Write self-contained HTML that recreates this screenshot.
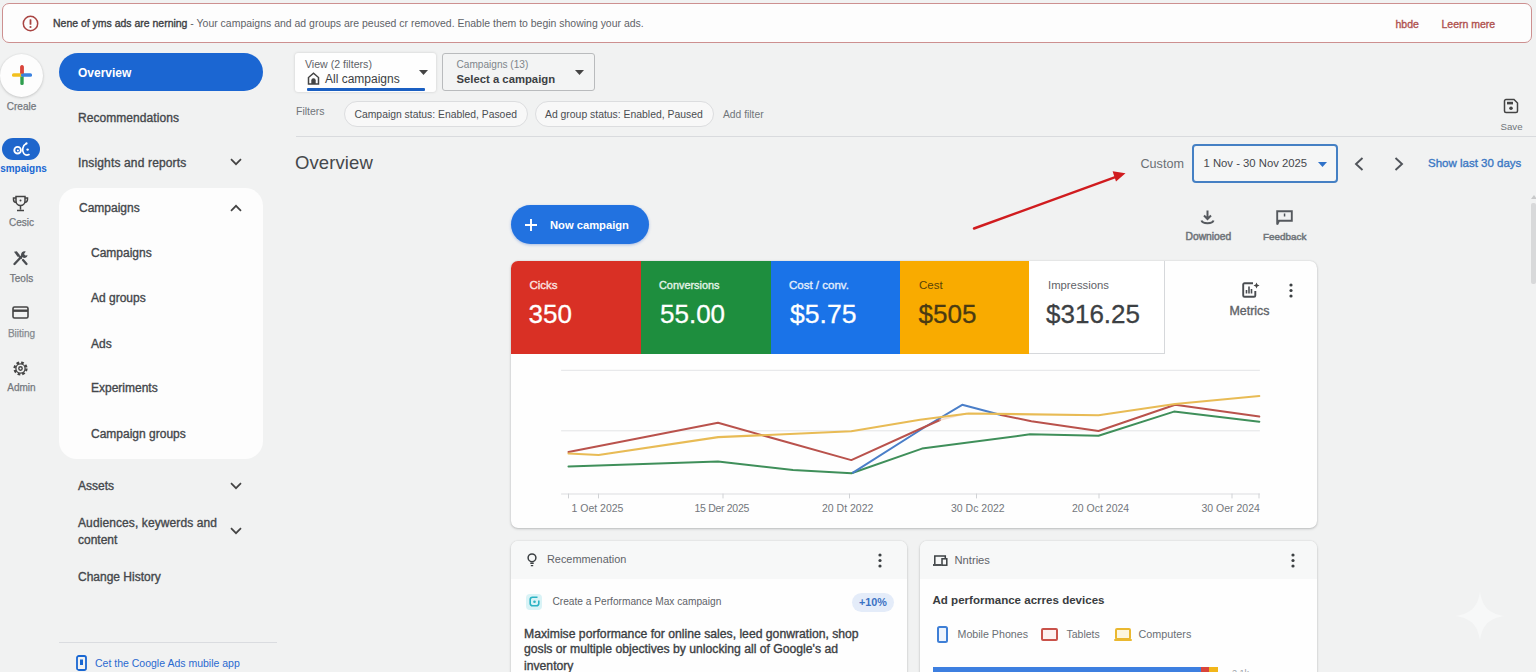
<!DOCTYPE html>
<html lang="en">
<head>
<meta charset="utf-8">
<title>Overview</title>
<style>
*{box-sizing:border-box;margin:0;padding:0}
html,body{width:1536px;height:672px;overflow:hidden;background:#f1f2f2}
body{font-family:"Liberation Sans",sans-serif;color:#3c4043;position:relative;font-size:12px}
.a{position:absolute;white-space:nowrap;line-height:1}
.m{-webkit-text-stroke:0.35px currentColor}
.b{font-weight:bold}
svg{position:absolute;overflow:visible}
/* banner */
#banner{left:2px;top:2.500px;width:1529.500px;height:40.600px;border:1.800px solid #cd9090;border-radius:7px;background:#fdfdfd}
/* rail */
.rl{font-size:10px;color:#74787d;text-align:center;width:60px;left:-8.5px;-webkit-text-stroke:0.25px currentColor}
/* nav */
.nv{font-size:12px;color:#44474b;left:78px}
.sub{font-size:12px;color:#44474b;left:91px}
.tl{font-size:11.500px}
.tv{font-size:26px;-webkit-text-stroke:0.3px currentColor}
.xl{top:503px;font-size:10.500px;color:#73777c}
</style>
</head>
<body>
<!-- BANNER -->
<div class="a" id="banner"></div>
<svg style="left:22px;top:14.700px" width="17" height="17" viewBox="0 0 17 17"><circle cx="8.5" cy="8.5" r="7.2" fill="none" stroke="#a94442" stroke-width="1.5"/><rect x="7.6" y="4.2" width="1.8" height="5.6" rx=".6" fill="#a94442"/><circle cx="8.5" cy="12" r="1.1" fill="#a94442"/></svg>
<div class="a" id="bt" style="left:53px;top:19px;font-size:10.47px;color:#5f6368"><span class="m" style="color:#3c4043">Nene of yms ads are nerning</span> - Your campaigns and ad groups are peused cr removed. Enable them to begin showing your ads.</div>
<div class="a m" id="hide" style="left:1395.500px;top:18.800px;font-size:10.5px;color:#b0524f">hbde</div>
<div class="a m" id="learn" style="left:1441.500px;top:18.800px;font-size:10.5px;color:#b0524f">Leern mere</div>

<!-- LEFT RAIL -->
<div class="a" style="left:-0.5px;top:53.5px;width:43px;height:43px;border-radius:50%;background:#fdfdfd;box-shadow:0 1px 3px rgba(0,0,0,.16),0 0 2px rgba(0,0,0,.08)"></div>
<svg style="left:11.5px;top:65px" width="20" height="20" viewBox="0 0 20 20"><rect x="8.3" y="0" width="3.4" height="11" rx="1.5" fill="#d9453b"/><rect x="8.3" y="9" width="3.4" height="11" rx="1.5" fill="#2f9e4f"/><rect x="0" y="8.3" width="11" height="3.4" rx="1.5" fill="#f2c01e"/><rect x="9" y="8.3" width="11" height="3.4" rx="1.5" fill="#3b82e0"/><rect x="8.3" y="1.500" width="3.400" height="7" fill="#d9453b"/></svg>
<div class="a rl" style="top:101.500px">Creale</div>

<div class="a" style="left:1.500px;top:137.500px;width:38.500px;height:22px;border-radius:11px;background:#1e66cc"></div>
<svg style="left:12.500px;top:140.500px" width="18" height="16" viewBox="0 0 18 16"><circle cx="4.600" cy="9.200" r="3.300" fill="none" stroke="#fff" stroke-width="1.900"/><circle cx="4.900" cy="9.500" r="1" fill="#fff"/><path d="M13 2.800C9.300 4.500 8.800 10 10.800 12.500C12.300 14.200 14.800 14.200 16 13.600" fill="none" stroke="#fff" stroke-width="1.700" stroke-linecap="round"/><circle cx="14.600" cy="8.600" r="1.200" fill="#fff"/><circle cx="13.500" cy="2.400" r="1.100" fill="#fff"/></svg>
<div class="a rl b" style="top:164px;color:#1967d2;font-size:10px;left:-6.500px;-webkit-text-stroke:0">smpaigns</div>

<svg style="left:12px;top:195px" width="17" height="17" viewBox="0 0 17 17" fill="none" stroke="#444" stroke-width="1.5"><path d="M4 1.5h9v4.5a4.5 4.5 0 0 1-9 0z"/><path d="M4 3H1.5v1.5a3 3 0 0 0 3 3M13 3h2.500v1.500a3 3 0 0 1-3 3"/><path d="M8.500 10.500v4M5 15.500h7"/><circle cx="8.500" cy="5.500" r="1" fill="#444" stroke="none"/></svg>
<div class="a rl" style="top:218px">Cesic</div>

<svg style="left:12px;top:250px" width="17" height="16" viewBox="0 0 17 16" fill="none" stroke="#4a4d51" stroke-width="2.300" stroke-linecap="round"><path d="M2.500 14 L10.500 5.500"/><path d="M13.800 1.600a3.300 3.300 0 1 0 1.800 3.600l-2.300.4-1.300-1.700z" fill="#4a4d51" stroke="none"/><path d="M2 1.800 L4.800 1.200 8 5.200 5.800 7z" fill="#4a4d51" stroke="none"/><path d="M7.500 6.500 L9 8M11 10 L14.500 14"/></svg>
<div class="a rl" style="top:273.500px">Teols</div>

<svg style="left:12px;top:306px" width="17" height="13" viewBox="0 0 17 13" fill="none" stroke="#444" stroke-width="1.600"><rect x="1" y="1" width="15" height="11" rx="1.500"/><path d="M1 4.700h15" stroke-width="2.400"/></svg>
<div class="a rl" style="top:328.500px;color:#868b90">Biiting</div>

<svg style="left:12px;top:360px" width="17" height="17" viewBox="0 0 17 17" fill="none" stroke="#444"><circle cx="8.500" cy="8.500" r="6" stroke-width="2.200" stroke-dasharray="2.700 2"/><circle cx="8.500" cy="8.500" r="4.600" stroke-width="1.300"/><circle cx="8.500" cy="8.500" r="1.700" stroke-width="1.400"/></svg>
<div class="a rl" style="top:383px">Admin</div>

<!-- NAV -->
<div class="a" style="left:59px;top:53px;width:204px;height:38px;border-radius:19px;background:#1b66d2"></div>
<div class="a nv b" id="n1" style="top:66.500px;color:#fff">Overview</div>
<div class="a nv m" id="n2" style="letter-spacing:.06px;top:111.500px">Recommendations</div>
<div class="a nv m" id="n3" style="letter-spacing:.15px;top:156.500px">Insights and reports</div>
<svg style="left:230px;top:158px" width="12" height="8" viewBox="0 0 12 8"><path d="M1 1.200 L6 6.200 L11 1.200" fill="none" stroke="#444" stroke-width="1.700"/></svg>
<div class="a" style="left:59px;top:188px;width:204px;height:271px;border-radius:18px;background:#fdfdfd"></div>
<div class="a nv m" id="n4" style="top:202px;left:79px">Campaigns</div>
<svg style="left:230px;top:204px" width="12" height="8" viewBox="0 0 12 8"><path d="M1 6.800 L6 1.800 L11 6.800" fill="none" stroke="#444" stroke-width="1.700"/></svg>
<div class="a sub m" style="top:247px">Campaigns</div>
<div class="a sub m" style="top:292px">Ad groups</div>
<div class="a sub m" style="top:338px">Ads</div>
<div class="a sub m" style="top:382px">Experiments</div>
<div class="a sub m" style="top:428px">Campaign groups</div>
<div class="a nv m" id="n5" style="top:480px">Assets</div>
<svg style="left:230px;top:482px" width="12" height="8" viewBox="0 0 12 8"><path d="M1 1.200 L6 6.200 L11 1.200" fill="none" stroke="#444" stroke-width="1.700"/></svg>
<div class="a nv m" id="n6" style="letter-spacing:.1px;top:517px">Audiences, keywerds and</div>
<div class="a nv m" style="top:534px">content</div>
<svg style="left:230px;top:527px" width="12" height="8" viewBox="0 0 12 8"><path d="M1 1.200 L6 6.200 L11 1.200" fill="none" stroke="#444" stroke-width="1.700"/></svg>
<div class="a nv m" id="n7" style="top:571px">Change History</div>
<div class="a" style="left:59px;top:642px;width:218px;height:1px;background:#dadce0"></div>
<svg style="left:76px;top:655px" width="11" height="16" viewBox="0 0 11 16"><rect x="1" y="1" width="9" height="14" rx="1.800" fill="none" stroke="#1967d2" stroke-width="1.800"/><rect x="4" y="4.500" width="3" height="5.500" fill="#1967d2"/></svg>
<div class="a" id="app" style="left:95px;top:658px;font-size:10.500px;color:#2a6ad0">Cet the Coogle Ads mubile app</div>

<!-- MAIN placeholder -->
<!-- TOP CONTROLS -->
<div class="a" style="left:295px;top:53px;width:141.300px;height:38.800px;border-radius:3px;background:#fefefe;box-shadow:0 0 3px rgba(0,0,0,.16)"></div>
<div class="a" style="left:307px;top:88.300px;width:118px;height:3.200px;background:#1a5fc2;border-radius:1px"></div>
<div class="a" id="v1" style="left:305px;top:59px;font-size:10.600px;color:#5f6368">View (2 filters)</div>
<svg style="left:307px;top:72px" width="13" height="13" viewBox="0 0 13 13"><path d="M1.500 12V5.500L6.500 1.300 11.500 5.500V12z" fill="none" stroke="#444" stroke-width="1.500"/><path d="M4.300 12V8.500a2.200 2.200 0 0 1 4.400 0V12z" fill="#444"/></svg>
<div class="a" id="v2" style="left:325px;top:72.500px;font-size:12px;color:#3c4043">All campaigns</div>
<svg style="left:419px;top:70px" width="9" height="5" viewBox="0 0 9 5"><path d="M0 0h9L4.500 5z" fill="#444"/></svg>

<div class="a" style="left:442.300px;top:52.800px;width:153.200px;height:38.200px;border-radius:3px;border:1px solid #b9bbbd;background:#f3f4f4"></div>
<div class="a" id="c1" style="left:456.500px;top:60px;font-size:10.1px;color:#80868b">Campaigns (13)</div>
<div class="a b" id="c2" style="left:456.500px;top:73.800px;font-size:11.3px;color:#3c4043">Select a campaign</div>
<svg style="left:575px;top:70px" width="9" height="5" viewBox="0 0 9 5"><path d="M0 0h9L4.500 5z" fill="#444"/></svg>

<div class="a" id="f0" style="left:296px;top:106px;font-size:10.500px;color:#70757a">Filters</div>
<div class="a" style="left:343.500px;top:101px;width:184.500px;height:26px;border-radius:13px;border:1px solid #dcdddf;background:#f8f8f8"></div>
<div class="a" id="f1" style="left:354.500px;top:110px;font-size:10.37px;color:#4a4d51">Campaign status: Enabled, Pasoed</div>
<div class="a" style="left:534.500px;top:101px;width:179px;height:26px;border-radius:13px;border:1px solid #dcdddf;background:#f8f8f8"></div>
<div class="a" id="f2" style="left:545px;top:110px;font-size:10.4px;color:#4a4d51">Ad group status: Enabled, Paused</div>
<div class="a" id="f3" style="left:723px;top:109.500px;font-size:10.300px;color:#70757a">Add filter</div>

<svg style="left:1503px;top:98px" width="16" height="16" viewBox="0 0 16 16" fill="none" stroke="#444" stroke-width="1.500"><path d="M1.500 3a1.500 1.500 0 0 1 1.500-1.500h8L14.500 5v8a1.500 1.500 0 0 1-1.500 1.500H3A1.500 1.500 0 0 1 1.500 13z"/><rect x="4" y="3.800" width="6" height="2.600" fill="#444" stroke="none"/><circle cx="8" cy="10.300" r="1.800" fill="#444" stroke="none"/></svg>
<div class="a" id="sv" style="left:1500.500px;top:121.800px;font-size:9.700px;color:#70757a">Save</div>

<div class="a" style="left:296px;top:136px;width:1240px;height:1px;background:#d9dbde"></div>

<div class="a" id="h1" style="left:295px;top:153.500px;font-size:18.500px;color:#45484c;letter-spacing:.1px">Overview</div>

<div class="a" id="cu" style="left:1140.500px;top:157.500px;font-size:12.6px;color:#6a6f74">Custom</div>
<div class="a" style="left:1191.500px;top:144px;width:146.500px;height:38.500px;border-radius:4px;border:2px solid #4580c4;background:#f5f6f6"></div>
<div class="a" id="dt" style="left:1203.500px;top:157.500px;font-size:11.3px;color:#45484c">1 Nov - 30 Nov 2025</div>
<svg style="left:1318px;top:161.500px" width="9" height="5" viewBox="0 0 9 5"><path d="M0 0h9L4.500 5z" fill="#2f72c9"/></svg>
<svg style="left:1354px;top:157px" width="10" height="14" viewBox="0 0 10 14"><path d="M8.500 1L2 7l6.500 6" fill="none" stroke="#50545a" stroke-width="1.900"/></svg>
<svg style="left:1394px;top:157px" width="10" height="14" viewBox="0 0 10 14"><path d="M1.500 1L8 7l-6.500 6" fill="none" stroke="#50545a" stroke-width="1.900"/></svg>
<div class="a m" id="sl" style="left:1428px;top:157.500px;font-size:11.500px;color:#3b78c4">Show last 30 days</div>

<!-- ARROW -->
<svg style="left:0;top:0" width="1536" height="672"><path d="M974 228.500L1118 176.200" stroke="#d01c1f" stroke-width="2.400" stroke-linecap="round"/><path d="M1112.600 171.300L1125.500 173.200L1116 181.600z" fill="#d01c1f"/></svg>

<!-- BUTTON / ACTIONS -->
<div class="a" style="left:511px;top:205px;width:137.500px;height:39px;border-radius:19.500px;background:#2272e0;box-shadow:0 1px 3px rgba(30,90,200,.35)"></div>
<svg style="left:525px;top:219px" width="12" height="12" viewBox="0 0 12 12"><path d="M6 0v12M0 6h12" stroke="#fff" stroke-width="1.900"/></svg>
<div class="a b" id="nc" style="left:550px;top:219.800px;font-size:11.2px;color:#fff">Now campaign</div>

<svg style="left:1200px;top:210px" width="15" height="15" viewBox="0 0 15 15" fill="none" stroke="#55595e" stroke-width="2"><path d="M7.500 0.500v8M4 5.500l3.500 3.500 3.500-3.500"/><path d="M1.500 10.500c1 3.500 11 3.500 12 0"/></svg>
<div class="a m" id="dl" style="-webkit-text-stroke:0.5px currentColor;left:1185.500px;top:231.500px;font-size:10.300px;color:#70757a">Downioed</div>
<svg style="left:1276px;top:210px" width="17" height="16" viewBox="0 0 17 16" fill="none" stroke="#55595e" stroke-width="1.900"><path d="M1.200 14.500V1.200h14.600v9.600H3z"/><rect x="7.800" y="3.500" width="1.500" height="3" fill="#50545a" stroke="none"/></svg>
<div class="a m" id="fb" style="-webkit-text-stroke:0.5px currentColor;left:1263px;top:231.500px;font-size:9.9px;color:#70757a">Feedback</div>

<!-- scrollbar -->
<div class="a" style="left:1531px;top:203px;width:5px;height:81px;background:#d8d9da;border-radius:2px"></div>
<div class="a" style="left:1531px;top:195px;width:0;height:0;border-left:3px solid transparent;border-right:3px solid transparent;border-bottom:4px solid #c8c9ca"></div>

<!-- MAIN CARD -->
<div class="a" style="left:511px;top:260.500px;width:806px;height:267px;border-radius:7px;background:#fefefe;box-shadow:0 1px 2.500px rgba(60,64,67,.28),0 0 1.500px rgba(60,64,67,.18)"></div>
<div class="a" style="left:511px;top:260.500px;width:129.500px;height:93px;background:#d93025;border-radius:7px 0 0 0"></div>
<div class="a" style="left:640.500px;top:260.500px;width:130px;height:93px;background:#1e8e3e"></div>
<div class="a" style="left:770.500px;top:260.500px;width:129px;height:93px;background:#1a73e8"></div>
<div class="a" style="left:899.500px;top:260.500px;width:129.500px;height:93px;background:#f9ab00"></div>
<div class="a" style="left:1029px;top:260.500px;width:135.500px;height:93.300px;background:#fff;border-right:1px solid #d6d8db;border-bottom:1px solid #d6d8db"></div>

<div class="a m tl" id="t1" style="left:529.500px;top:280px;color:#fbe3e1">Cicks</div>
<div class="a tv" id="u1" style="left:528.500px;top:300.500px;color:#fff">350</div>
<div class="a m tl" id="t2" style="font-size:10.9px;left:659px;top:280px;color:#e4f3e8">Conversions</div>
<div class="a tv" id="u2" style="left:660px;top:300.500px;color:#fff">55.00</div>
<div class="a m tl" id="t3" style="left:789px;top:280px;color:#e3eefc">Cost / conv.</div>
<div class="a tv" id="u3" style="font-size:26.600px;left:790px;top:300.500px;color:#fff">$5.75</div>
<div class="a tl" id="t4" style="left:919px;top:280px;color:#5a4308">Cest</div>
<div class="a tv" id="u4" style="left:918.500px;top:300.500px;color:#4a3a12">$505</div>
<div class="a tl" id="t5" style="font-size:11.3px;left:1048px;top:280px;color:#5f6368">Impressions</div>
<div class="a tv" id="u5" style="left:1046px;top:300.500px;color:#3c4043">$316.25</div>

<svg style="left:1241.500px;top:282px" width="18" height="16" viewBox="0 0 18 16" fill="none" stroke="#4a4d51" stroke-width="1.900"><path d="M11 1.200H2.500a1.300 1.300 0 0 0-1.300 1.300v11a1.300 1.300 0 0 0 1.300 1.300h9.500a1.300 1.300 0 0 0 1.300-1.300V9"/><path d="M4.500 11.500V8M7 11.500V4.500M9.500 11.500V7" stroke-width="1.600"/><path d="M14.500 0.500l.9 2.100 2.100.9-2.100.9-.9 2.100-.9-2.100-2.100-.9 2.100-.9z" fill="#444" stroke="none"/></svg>
<div class="a m" id="mt" style="left:1229.500px;top:305px;font-size:12.4px;color:#5f6368">Metrics</div>
<svg style="left:1288.500px;top:283px" width="4" height="15" viewBox="0 0 4 15" fill="#3c4043"><circle cx="2" cy="2" r="1.600"/><circle cx="2" cy="7.500" r="1.600"/><circle cx="2" cy="13" r="1.600"/></svg>

<!-- CHART -->
<svg style="left:0;top:0" width="1536" height="672" fill="none" stroke-linejoin="round" stroke-linecap="round">
<g stroke="#e3e4e6" stroke-width="1">
<path d="M561.500 370.300H1259.500M561.500 430.800H1259.500"/>
<path d="M561.500 494H1259.500" stroke="#dcdde0"/>
<path d="M568.500 494v4M598.500 494v4M723 494v4M849.500 494v4M976.500 494v4M1099 494v4M1232 494v4M1259 494v4" stroke="#d0d2d5"/>
</g>
<path d="M568.500 466.400L718 461.400L793 470L851.500 473.200L922 448.600L1030 434.300L1098.500 435.700L1174 411.600L1259.300 421.700" stroke="#3f8f5a" stroke-width="2"/>
<path d="M853 472.700L925 427L962.200 404.800L1001 415" stroke="#4a7ec8" stroke-width="2"/>
<path d="M568.500 452L718 422.800L851.300 460.100L920 429L940 420" stroke="#b9524c" stroke-width="2"/>
<path d="M940 420L966 413.500" stroke="#f0c9b0" stroke-width="1.800" opacity=".6"/>
<path d="M1001 415L1031.400 421.200L1098.500 431L1175.200 404.800L1259.300 416.500" stroke="#b9524c" stroke-width="2"/>
<path d="M568.500 453.500L598.600 455L718.200 437.100L851.300 431.300L920 419.800L968.500 413.500L1098.500 415.200L1175 404L1259.300 396" stroke="#e8bb55" stroke-width="2.100"/>
</svg>
<div class="a xl" id="x1" style="left:571.500px">1 Oet 2025</div>
<div class="a xl" id="x2" style="left:694.500px;letter-spacing:-0.3px">15 Der 2025</div>
<div class="a xl" id="x3" style="left:822px">20 Dt 2022</div>
<div class="a xl" id="x4" style="left:951px">30 Dc 2022</div>
<div class="a xl" id="x5" style="left:1072px">20 Oct 2024</div>
<div class="a xl" id="x6" style="left:1201.500px">30 Oer 2024</div>

<!-- REC CARD -->
<div class="a" style="left:511px;top:540.500px;width:396px;height:140px;border-radius:7px;background:#fefefe;box-shadow:0 1px 2.500px rgba(60,64,67,.26),0 0 1.500px rgba(60,64,67,.18)"></div>
<div class="a" style="left:511px;top:540.500px;width:396px;height:38px;border-radius:7px 7px 0 0;background:#f7f8f8"></div>
<svg style="left:527px;top:553px" width="10" height="14" viewBox="0 0 10 14" fill="none" stroke="#3c4043" stroke-width="1.500"><circle cx="5" cy="4.800" r="3.900"/><path d="M3.300 10.300h3.400M3.800 12.600h2.400" stroke-width="1.400"/></svg>
<div class="a" id="r1" style="left:547px;top:553.500px;font-size:10.9px;color:#5f6368">Recemmenation</div>
<svg style="left:877.500px;top:552.500px" width="4" height="15" viewBox="0 0 4 15" fill="#3c4043"><circle cx="2" cy="2" r="1.600"/><circle cx="2" cy="7.500" r="1.600"/><circle cx="2" cy="13" r="1.600"/></svg>
<div class="a" style="left:526px;top:593.500px;width:16px;height:16px;border-radius:4px;background:#d9f3f6"></div>
<svg style="left:528.500px;top:596px" width="11" height="11" viewBox="0 0 11 11" fill="none" stroke="#2bb3c4" stroke-width="1.600"><path d="M8.500 1.200H3.500A2.300 2.300 0 0 0 1.200 3.500v4A2.300 2.300 0 0 0 3.500 9.800h4A2.300 2.300 0 0 0 9.800 7.500V4.500"/><circle cx="5.500" cy="5.700" r="1.300" fill="#2bb3c4" stroke="none"/></svg>
<div class="a" id="r2" style="left:552.500px;top:596.500px;font-size:10.17px;color:#5f6368">Create a Performance Max campaign</div>
<div class="a" style="left:851.500px;top:592.500px;width:42.500px;height:19.500px;border-radius:10px;background:#e4ecf9"></div>
<div class="a b" id="r3" style="left:859px;top:597px;font-size:10.800px;color:#3b72c4">+10%</div>
<div class="a m" id="r4" style="left:524px;top:627.500px;font-size:12.2px;color:#3c4043">Maximise porformance for online sales, leed gonwration, shop</div>
<div class="a m" id="r5" style="left:524px;top:643px;font-size:12.2px;color:#3c4043">gosls or multiple objectives by unlocking all of Google's ad</div>
<div class="a m" id="r6" style="left:524px;top:659.500px;font-size:12.2px;color:#3c4043">inventory</div>

<!-- DEVICES CARD -->
<div class="a" style="left:919.500px;top:540.500px;width:397.500px;height:140px;border-radius:7px;background:#fefefe;box-shadow:0 1px 2.500px rgba(60,64,67,.26),0 0 1.500px rgba(60,64,67,.18)"></div>
<div class="a" style="left:919.500px;top:540.500px;width:397.500px;height:38px;border-radius:7px 7px 0 0;background:#f7f8f8"></div>
<svg style="left:932.500px;top:554.500px" width="15" height="11" viewBox="0 0 15 11" fill="none" stroke="#3c4043" stroke-width="1.500"><path d="M1.800 9V1h10.500v2"/><path d="M0 10h8.500" stroke-width="1.800"/><rect x="9" y="3.800" width="4.800" height="6.400"/></svg>
<div class="a" id="d1" style="left:954.500px;top:554.500px;font-size:11.2px;color:#5f6368">Nntries</div>
<svg style="left:1291px;top:552.500px" width="4" height="15" viewBox="0 0 4 15" fill="#3c4043"><circle cx="2" cy="2" r="1.600"/><circle cx="2" cy="7.500" r="1.600"/><circle cx="2" cy="13" r="1.600"/></svg>
<div class="a b" id="d2" style="left:932.500px;top:594.500px;font-size:11.56px;color:#393c40">Ad performance acrres devices</div>
<div class="a" style="left:936.500px;top:625.500px;width:11.500px;height:17px;border:2px solid #3f7fd6;border-radius:2.500px;background:#eef4fd"></div>
<div class="a" id="d3" style="left:957.500px;top:629px;font-size:10.67px;color:#6a6f74">Mobile Phones</div>
<div class="a" style="left:1041px;top:628px;width:17px;height:13px;border:2px solid #c9524a;border-radius:2px;background:#fdf1f0"></div>
<div class="a" id="d4" style="left:1066.500px;top:629px;font-size:10.5px;color:#6a6f74">Tablets</div>
<div class="a" style="left:1114.500px;top:628px;width:16px;height:11.500px;border:2px solid #eab830;border-radius:2px;background:#fdf6e0"></div>
<div class="a" style="left:1113.500px;top:639px;width:18px;height:2px;background:#eab830;border-radius:1px"></div>
<div class="a" id="d5" style="left:1138.500px;top:629px;font-size:10.8px;color:#6a6f74">Computers</div>
<div class="a" style="left:933px;top:666.500px;width:267.500px;height:8px;background:#3d7fe0"></div>
<div class="a" style="left:1200.500px;top:666.500px;width:8.500px;height:8px;background:#d9453b"></div>
<div class="a" style="left:1209px;top:666.500px;width:8.500px;height:8px;background:#f2b61a"></div>
<div class="a" style="left:1232px;top:669px;font-size:9px;color:#9aa0a6">2.1k</div>

<!-- SPARKLE -->
<svg style="left:1456px;top:592px" width="48" height="48" viewBox="-24 -24 48 48"><path d="M0-24C2.500-9 9-2.500 24 0C9 2.500 2.500 9 0 24C-2.500 9-9 2.500-24 0C-9-2.500-2.500-9 0-24z" fill="#f7f8f8"/></svg>

</body>
</html>
